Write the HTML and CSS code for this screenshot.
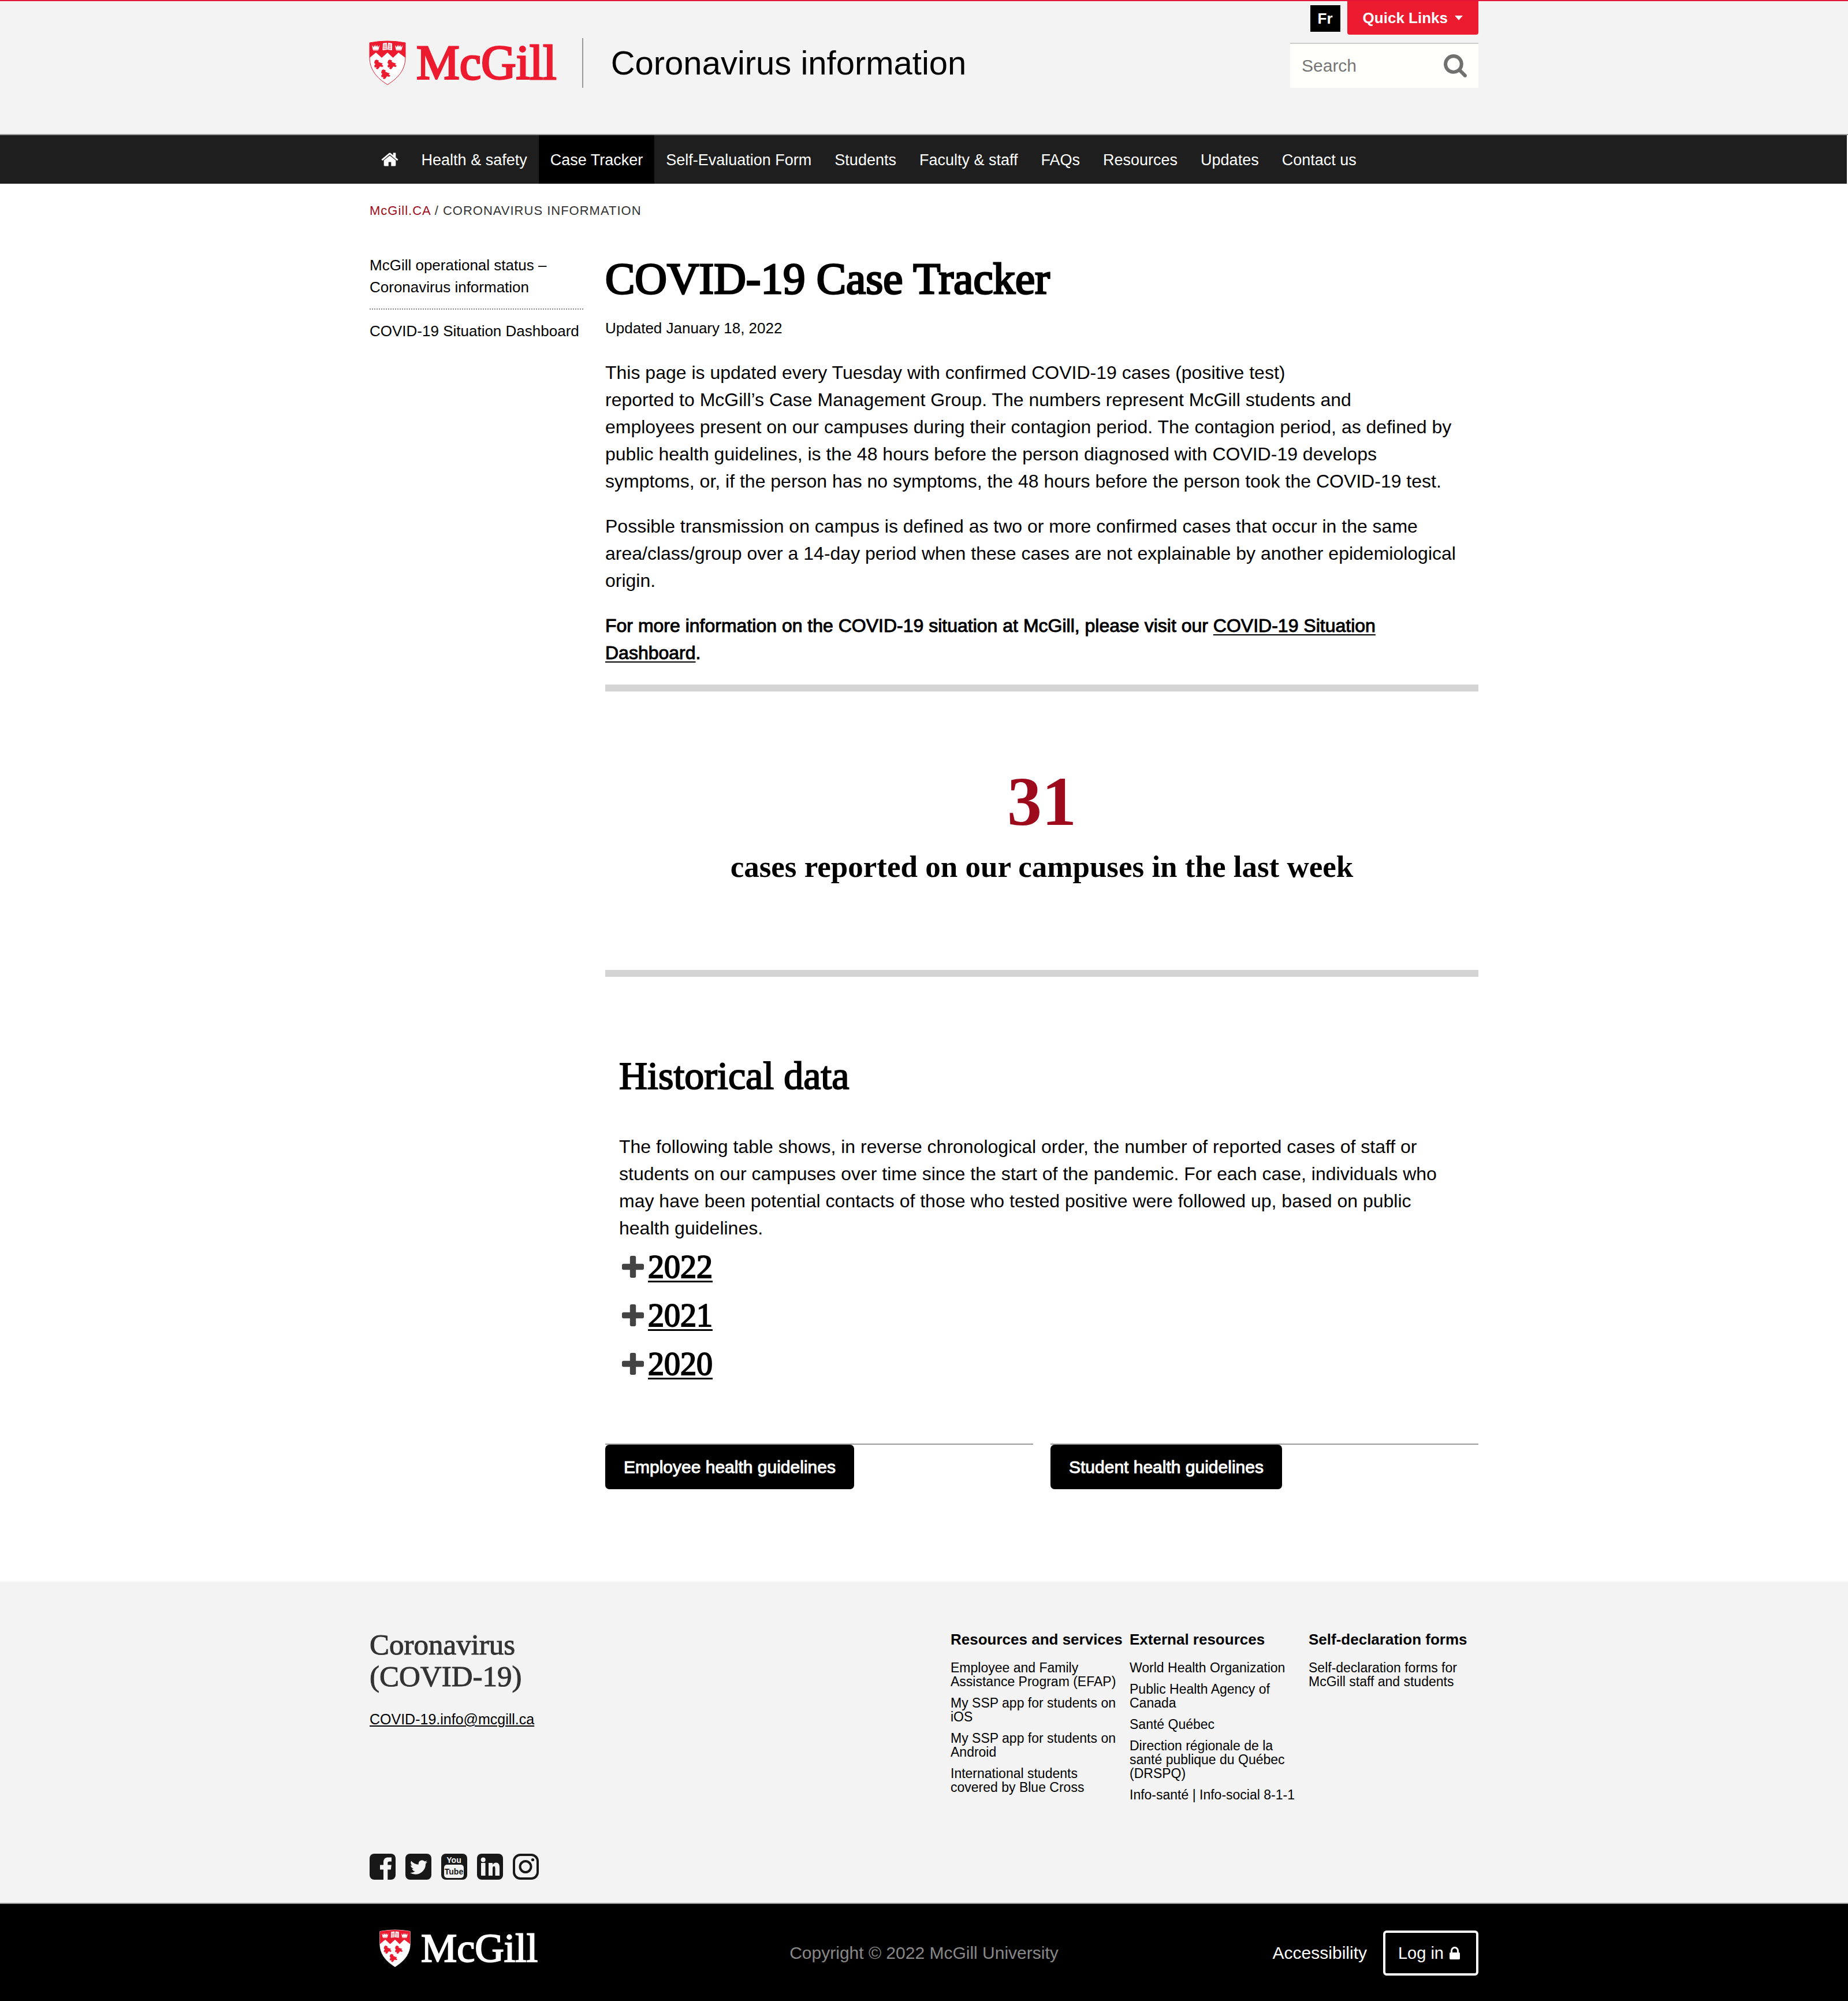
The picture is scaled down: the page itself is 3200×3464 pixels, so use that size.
FILE: index.html
```html
<!DOCTYPE html>
<html lang="en">
<head>
<meta charset="utf-8">
<meta name="viewport" content="width=device-width, initial-scale=1">
<title>COVID-19 Case Tracker | Coronavirus information - McGill University</title>
<link rel="stylesheet" href="styles.css">
</head>
<body>
<svg class="defs" aria-hidden="true">
  <symbol id="shield" viewBox="-1 -1 64 78">
    <path class="shield-field" d="M0 3Q31-3 62 3V28C62 51 48 65 31 75.500C14 65 0 51 0 28Z"/>
    <path class="shield-top" d="M0 3Q31-3 62 3V29L50 20 40.500 29 31 20 21 29 11 20 0 29Z"/>
    <g class="shield-top">
      <path id="bird" d="M9 34q2-3 5-1l2 1-1 2q4 2 8 3l-2 2 3 2-2 2-4-1-2 3-2 2-3-1 1-3-3 1-1-3 2-3-2-2z"/>
      <use href="#bird" x="23"/>
      <use href="#bird" x="12" y="17"/>
    </g>
    <g class="shield-mark">
      <path d="M23 4l7-1 .5 12-8 1zM32 3l7 1v12l-8-1z"/>
      <path id="crown" d="M4 7l3 4 1-4 2 3 .5-4 1 4 2-3 1 4 3-4-2 8h-10zM6 15.500v1h9v-1z"/>
      <use href="#crown" x="40"/>
    </g>
    <path class="shield-lines" d="M24 7h5M24 10h5M24 13h5M33 7h4M33 10h4M33 13h4"/>
  </symbol>
</svg>

<header class="header">
  <div class="wrap header-row">
    <div class="brand">
      <a class="logo" href="#">
        <svg class="logo-shield" aria-hidden="true"><use href="#shield"/></svg>
        <span class="logo-word">McGill</span>
      </a>
      <a class="site-name" href="#">Coronavirus information</a>
    </div>
    <div class="tools">
      <div class="tools-row">
        <a class="lang" href="#">Fr</a>
        <button class="quick" type="button">Quick Links <span class="caret"></span></button>
      </div>
      <form class="search">
        <input class="search-box" type="text" placeholder="Search" aria-label="Search">
        <button class="search-go" type="button" aria-label="Submit search">
          <svg class="icon-search" viewBox="64 128 1664 1664"><path d="M1216 832q0-185-131.500-316.500t-316.500-131.500-316.500 131.500-131.500 316.500 131.500 316.500 316.500 131.500 316.500-131.500 131.500-316.500zm512 832q0 52-38 90t-90 38q-54 0-90-38l-343-342q-179 124-399 124-143 0-273.500-55.500t-225-150-150-225-55.500-273.500 55.500-273.500 150-225 225-150 273.500-55.500 273.500 55.500 225 150 150 225 55.500 273.500q0 220-124 399l343 343q37 37 37 90z"/></svg>
        </button>
      </form>
    </div>
  </div>
</header>

<nav class="nav" aria-label="Main">
  <ul class="wrap nav-list">
    <li><a class="nav-link nav-home" href="#" aria-label="Home"><svg class="icon-home" viewBox="96 0 1600 1792"><path d="M1472 992v480q0 26-19 45t-45 19h-384v-384h-256v384h-384q-26 0-45-19t-19-45v-480q0-1 .5-3t.5-3l575-474 575 474q1 2 1 6zm223-69l-62 74q-8 9-21 11h-3q-13 0-21-7l-692-577-692 577q-12 8-24 7-13-2-21-11l-62-74q-8-10-7-23.500t11-21.500l719-599q32-26 76-26t76 26l244 204v-195q0-14 9-23t23-9h192q14 0 23 9t9 23v408l219 182q10 8 11 21.500t-7 23.500z"/></svg></a></li>
    <li><a class="nav-link" href="#">Health &amp; safety</a></li>
    <li><a class="nav-link nav-current" href="#" aria-current="page">Case Tracker</a></li>
    <li><a class="nav-link" href="#">Self-Evaluation Form</a></li>
    <li><a class="nav-link" href="#">Students</a></li>
    <li><a class="nav-link" href="#">Faculty &amp; staff</a></li>
    <li><a class="nav-link" href="#">FAQs</a></li>
    <li><a class="nav-link" href="#">Resources</a></li>
    <li><a class="nav-link" href="#">Updates</a></li>
    <li><a class="nav-link" href="#">Contact us</a></li>
  </ul>
</nav>

<div class="wrap crumbs"><a class="crumb-home" href="#">McGill.CA</a> / CORONAVIRUS INFORMATION</div>

<div class="wrap page">
  <aside>
    <ul class="side-list">
      <li class="side-item"><a href="#">McGill operational status – Coronavirus information</a></li>
      <li class="side-item"><a href="#">COVID-19 Situation Dashboard</a></li>
    </ul>
  </aside>
  <main>
    <h1 class="title">COVID-19 Case Tracker</h1>
    <p class="updated">Updated January 18, 2022</p>
    <p class="text">This page is updated every Tuesday with confirmed COVID-19 cases (positive test)<br>reported to McGill’s Case Management Group. The numbers represent McGill students and<br>employees present on our campuses during their contagion period. The contagion period, as defined by<br>public health guidelines, is the 48 hours before the person diagnosed with COVID-19 develops<br>symptoms, or, if the person has no symptoms, the 48 hours before the person took the COVID-19 test.</p>
    <p class="text">Possible transmission on campus is defined as two or more confirmed cases that occur in the same<br>area/class/group over a 14-day period when these cases are not explainable by another epidemiological<br>origin.</p>
    <p class="text text-strong">For more information on the COVID-19 situation at McGill, please visit our <a class="text-link" href="#">COVID-19 Situation<br>Dashboard</a>.</p>
    <section class="stat">
      <p class="stat-number">31</p>
      <h2 class="stat-label">cases reported on our campuses in the last week</h2>
    </section>
    <section class="history">
      <h2 class="history-title">Historical data</h2>
      <p class="text history-text">The following table shows, in reverse chronological order, the number of reported cases of staff or<br>students on our campuses over time since the start of the pandemic. For each case, individuals who<br>may have been potential contacts of those who tested positive were followed up, based on public<br>health guidelines.</p>
      <h3 class="year"><svg class="icon-plus" viewBox="192 128 1408 1408" aria-hidden="true"><path id="plus" d="M1600 736v192q0 40-28 68t-68 28h-416v416q0 40-28 68t-68 28h-192q-40 0-68-28t-28-68v-416h-416q-40 0-68-28t-28-68v-192q0-40 28-68t68-28h416v-416q0-40 28-68t68-28h192q40 0 68 28t28 68v416h416q40 0 68 28t28 68z"/></svg><a class="year-link" href="#">2022</a></h3>
      <h3 class="year"><svg class="icon-plus" viewBox="192 128 1408 1408" aria-hidden="true"><use href="#plus"/></svg><a class="year-link" href="#">2021</a></h3>
      <h3 class="year"><svg class="icon-plus" viewBox="192 128 1408 1408" aria-hidden="true"><use href="#plus"/></svg><a class="year-link" href="#">2020</a></h3>
    </section>
    <div class="guides">
      <div class="guide"><a class="guide-button" href="#">Employee health guidelines</a></div>
      <div class="guide"><a class="guide-button" href="#">Student health guidelines</a></div>
    </div>
  </main>
</div>

<footer>
  <div class="info">
    <div class="wrap info-row">
      <div>
        <h2 class="info-title">Coronavirus<br>(COVID-19)</h2>
        <a class="info-mail" href="#">COVID-19.info@mcgill.ca</a>
        <div class="social">
          <a href="#" aria-label="Facebook"><svg class="icon-social" viewBox="0 0 45 45"><rect class="ink" width="45" height="45" rx="8"/><path class="paper" d="M24 45V27.500h-6v-8h6v-5c0-5.500 3.300-8 8-8h6v7h-4c-2 0-2.700 1-2.700 2.700v3.300h6.500l-1 8h-5.500V45z"/></svg></a>
          <a href="#" aria-label="Twitter"><svg class="icon-social" viewBox="0 0 45 45"><rect class="ink" width="45" height="45" rx="8"/><svg x="8" y="11" width="30" height="25" viewBox="108 256 1576 1280"><path class="paper" d="M1684 408q-67 98-162 167 1 14 1 42 0 130-38 259.500t-115.500 248.500-184.500 210.500-258 146-323 54.500q-271 0-496-145 35 4 78 4 225 0 401-138-105-2-188-64.500t-114-159.500q33 5 61 5 43 0 85-11-112-23-185.500-111.500t-73.500-205.500v-4q68 38 146 41-66-44-105-115t-39-154q0-88 44-163 121 149 294.500 238.500t371.500 99.500q-8-38-8-74 0-134 94.500-228.500t228.500-94.500q140 0 236 102 109-21 205-78-37 115-142 178 93-10 186-50z"/></svg></svg></a>
          <a href="#" aria-label="YouTube"><svg class="icon-social" viewBox="0 0 45 45"><rect class="ink" width="45" height="45" rx="8"/><rect class="paper" x="5" y="19" width="34" height="23" rx="5"/><text class="tube paper" x="22" y="16">You</text><text class="tube ink" x="22" y="36">Tube</text></svg></a>
          <a href="#" aria-label="LinkedIn"><svg class="icon-social" viewBox="0 0 45 45"><rect class="ink" width="45" height="45" rx="8"/><path class="paper" d="M7 16h7.500v22H7zM20 16h7v3c1.500-2.300 3.500-3.500 6-3.500 4 0 6 3 6 8V38h-7.500V25.500c0-2.500-.7-3.700-2.200-3.700s-2.300 1.500-2.300 3.700V38h-7z"/><circle class="paper" cx="10.700" cy="10.500" r="4"/></svg></a>
          <a href="#" aria-label="Instagram"><svg class="icon-social" viewBox="0 0 45 45"><rect class="line" x="2" y="2" width="41" height="41" rx="11"/><circle class="line" cx="22" cy="22.500" r="9.500"/><circle class="ink" cx="34.500" cy="10.500" r="2.600"/></svg></a>
        </div>
      </div>
      <div class="info-columns">
        <section>
          <h3 class="info-head">Resources and services</h3>
          <ul class="info-list">
            <li><a href="#">Employee and Family Assistance Program (EFAP)</a></li>
            <li><a href="#">My SSP app for students on iOS</a></li>
            <li><a href="#">My SSP app for students on Android</a></li>
            <li><a href="#">International students covered by Blue Cross</a></li>
          </ul>
        </section>
        <section>
          <h3 class="info-head">External resources</h3>
          <ul class="info-list">
            <li><a href="#">World Health Organization</a></li>
            <li><a href="#">Public Health Agency of Canada</a></li>
            <li><a href="#">Santé Québec</a></li>
            <li><a href="#">Direction régionale de la santé publique du Québec (DRSPQ)</a></li>
            <li><a href="#">Info-santé | Info-social 8-1-1</a></li>
          </ul>
        </section>
        <section>
          <h3 class="info-head">Self-declaration forms</h3>
          <ul class="info-list">
            <li><a href="#">Self-declaration forms for McGill staff and students</a></li>
          </ul>
        </section>
      </div>
    </div>
  </div>
  <div class="base">
    <div class="wrap base-row">
      <a class="logo logo-small" href="#">
        <svg class="logo-shield" aria-hidden="true"><use href="#shield"/></svg>
        <span class="logo-word">McGill</span>
      </a>
      <p class="copyright">Copyright © 2022 McGill University</p>
      <div class="base-links">
        <a href="#">Accessibility</a>
        <a class="login" href="#">Log in <svg class="icon-lock" viewBox="320 128 1152 1408" aria-hidden="true"><path d="M640 768h512v-192q0-106-75-181t-181-75-181 75-75 181v192zm832 96v576q0 40-28 68t-68 28h-960q-40 0-68-28t-28-68v-576q0-40 28-68t68-28h32v-192q0-184 132-316t316-132 316 132 132 316v192h32q40 0 68 28t28 68z"/></svg></a>
      </div>
    </div>
  </div>
</footer>
</body>
</html>
```

FILE: styles.css
```css
:root {
  --red: #ed1b2f;
  --dark-red: #9d0a1c;
  --pale: #f3f3f3;
  --sans: "Liberation Sans", Arial, sans-serif;
  --serif: "Liberation Serif", "Times New Roman", serif;
}

* { box-sizing: border-box; }

body {
  margin: 0;
  background: #fff;
  color: #000;
  font: 26px/38px var(--sans);
}

h1, h2, h3, p, ul { margin: 0; padding: 0; }
ul { list-style: none; }
a { color: inherit; text-decoration: none; }
svg { display: block; }
button { border: 0; font-family: inherit; cursor: pointer; }

.defs { position: absolute; width: 0; height: 0; }

.wrap {
  width: 60%;
  margin: 0 auto;
}

/* Header */
.header {
  background: var(--pale);
  border-top: 2px solid #e3163a;
  border-bottom: 2px solid #999;
}

.header-row {
  display: flex;
  justify-content: space-between;
  align-items: flex-start;
  padding-bottom: 80px;
}

.brand {
  display: flex;
  margin-top: 64px;
}

.logo {
  display: flex;
  align-items: center;
  gap: 18px;
  padding-right: 44px;
  border-right: 2px solid #999;
  color: var(--red);
}

.logo-shield { width: 64px; height: 78px; margin-left: -1px; }
.logo-word {
  font: 84px/86px var(--serif);
  -webkit-text-stroke: 3px;
}

.site-name {
  padding-left: 48px;
  font-size: 58px;
  line-height: 86px;
}

.shield-field { fill: #fff; stroke: currentColor; stroke-width: 1; }
.shield-top { fill: #ed1b2f; }
.shield-mark { fill: #fff; }
.shield-lines { fill: none; stroke: #ed1b2f; stroke-width: 1; }

.tools { width: 326px; }

.tools-row {
  display: flex;
  justify-content: flex-end;
  align-items: flex-start;
  gap: 12px;
}

.lang {
  margin-top: 7px;
  padding: 0 13px;
  background: #000;
  color: #fff;
  font-weight: bold;
  line-height: 46px;
}

.quick {
  display: flex;
  align-items: center;
  gap: 12px;
  padding: 0 27px;
  border-radius: 0 0 4px 4px;
  background: var(--red);
  color: #fff;
  font-size: 26px;
  font-weight: bold;
  line-height: 58px;
}

.caret {
  border: 7px solid transparent;
  border-top: 8px solid #fff;
  border-bottom: 0;
}

.search {
  display: flex;
  margin-top: 14px;
  border-top: 2px solid #ccc;
  background: #fffffc;
}

.search-box {
  flex: 1;
  min-width: 0;
  padding: 0 20px;
  border: 0;
  background: none;
  font: 30px/76px var(--sans);
}
.search-box::placeholder { color: #757575; opacity: 1; }

.search-go { padding: 18px 20px; background: none; }
.icon-search { width: 40px; height: 40px; fill: #70706e; }

/* Navigation */
.nav {
  margin-right: 2px;
  background: #1e1e1e;
  color: #fff;
}

.nav-list { display: flex; }

.nav-link {
  display: block;
  padding: 2px 20px 0;
  font-size: 27px;
  line-height: 82px;
  white-space: nowrap;
}

.nav-current { background: #000; }

.nav-home {
  display: flex;
  align-items: center;
  height: 84px;
  padding-top: 0;
}
.icon-home { width: 30px; height: 32px; fill: #fff; }

.crumbs {
  padding: 31px 0 59px;
  color: #333;
  font-size: 22px;
  line-height: 32px;
  letter-spacing: 1px;
}
.crumb-home { color: var(--dark-red); }

/* Page */
.page {
  display: grid;
  grid-template-columns: 370px 1fr;
  gap: 38px;
  padding-bottom: 160px;
}

.side-item + .side-item {
  margin-top: 18px;
  padding-top: 18px;
  border-top: 2px dotted #888;
}

.title {
  font: 77px/84px var(--serif);
  -webkit-text-stroke: 3px;
}

.updated { margin: 25px 0 35px; }

.text {
  margin-bottom: 31px;
  font-size: 32px;
  line-height: 47px;
}
.text-strong { -webkit-text-stroke: 1px; }
.text-link { text-decoration: underline; text-underline-offset: 4px; text-decoration-thickness: 2px; }

.stat {
  padding: 125px 0 149px;
  border-top: 12px solid #d4d4d4;
  border-bottom: 12px solid #d4d4d4;
  text-align: center;
}

.stat-number {
  color: var(--dark-red);
  font: bold 120px/132px var(--serif);
}

.stat-label {
  margin-top: 16px;
  font: bold 53px/60px var(--serif);
}

.history { padding: 133px 24px 0; }

.history-title {
  font: 68px/76px var(--serif);
  -webkit-text-stroke: 2px;
}

.history-text { margin: 62px 0 1px; }

.year {
  display: flex;
  align-items: center;
  gap: 7px;
  padding-left: 5px;
  font: 56px/84px var(--serif);
  -webkit-text-stroke: 2px;
}
.year-link { text-decoration: underline; text-decoration-thickness: 3px; text-underline-offset: 5px; }
.icon-plus { width: 38px; height: 38px; fill: #444; }

.guides {
  display: grid;
  grid-template-columns: 1fr 1fr;
  gap: 30px;
  margin-top: 96px;
}

.guide {
  display: flex;
  border-top: 2px solid #999;
}

.guide-button {
  padding: 0 32px;
  border-radius: 7px;
  background: #000;
  color: #fff;
  font-size: 30px;
  line-height: 77px;
  -webkit-text-stroke: 1px;
}

/* Footer */
.info {
  background: var(--pale);
  border-bottom: 2px solid #999;
}

.info-row {
  display: flex;
  justify-content: space-between;
  padding: 82px 0 40px;
}

.info-title {
  color: #333;
  font: 51px/55px var(--serif);
  -webkit-text-stroke: 1px;
}

.info-mail {
  display: block;
  margin-top: 30px;
  font-size: 25px;
  line-height: 32px;
  text-decoration: underline;
}

.social {
  display: flex;
  gap: 17px;
  margin-top: 217px;
}

.icon-social { width: 45px; height: 45px; }
.ink { fill: #181818; }
.paper { fill: #f3f3f3; }
.line { fill: none; stroke: #181818; stroke-width: 4; }
.tube { font: bold 14px var(--sans); text-anchor: middle; }

.info-columns {
  display: grid;
  grid-template-columns: repeat(3, 294px);
  gap: 16px;
}

.info-head {
  padding-top: 2px;
  font-size: 26px;
  line-height: 32px;
  white-space: nowrap;
}

.info-list {
  display: grid;
  gap: 13px;
  margin-top: 21px;
  font-size: 23px;
  line-height: 24px;
}

.base { background: #000; color: #fff; }

.base-row {
  display: grid;
  grid-template-columns: 1fr auto 1fr;
  align-items: center;
  padding: 43px 0 45px;
  font-size: 30px;
}

.logo-small {
  padding: 0 0 16px 18px;
  border: 0;
  color: #fff;
}
.logo-small .logo-shield { width: 54px; height: 68px; }
.logo-small .logo-word {
  font-size: 70px;
  line-height: 62px;
  -webkit-text-stroke: 2px;
}

.copyright { color: #888; }

.base-links {
  display: flex;
  justify-content: flex-end;
  align-items: center;
  gap: 28px;
}

.login {
  display: flex;
  align-items: center;
  gap: 10px;
  padding: 0 28px 0 22px;
  border: 4px solid #fff;
  border-radius: 6px;
  font-size: 29px;
  line-height: 70px;
}
.icon-lock { width: 18px; height: 22px; fill: #fff; }
```
